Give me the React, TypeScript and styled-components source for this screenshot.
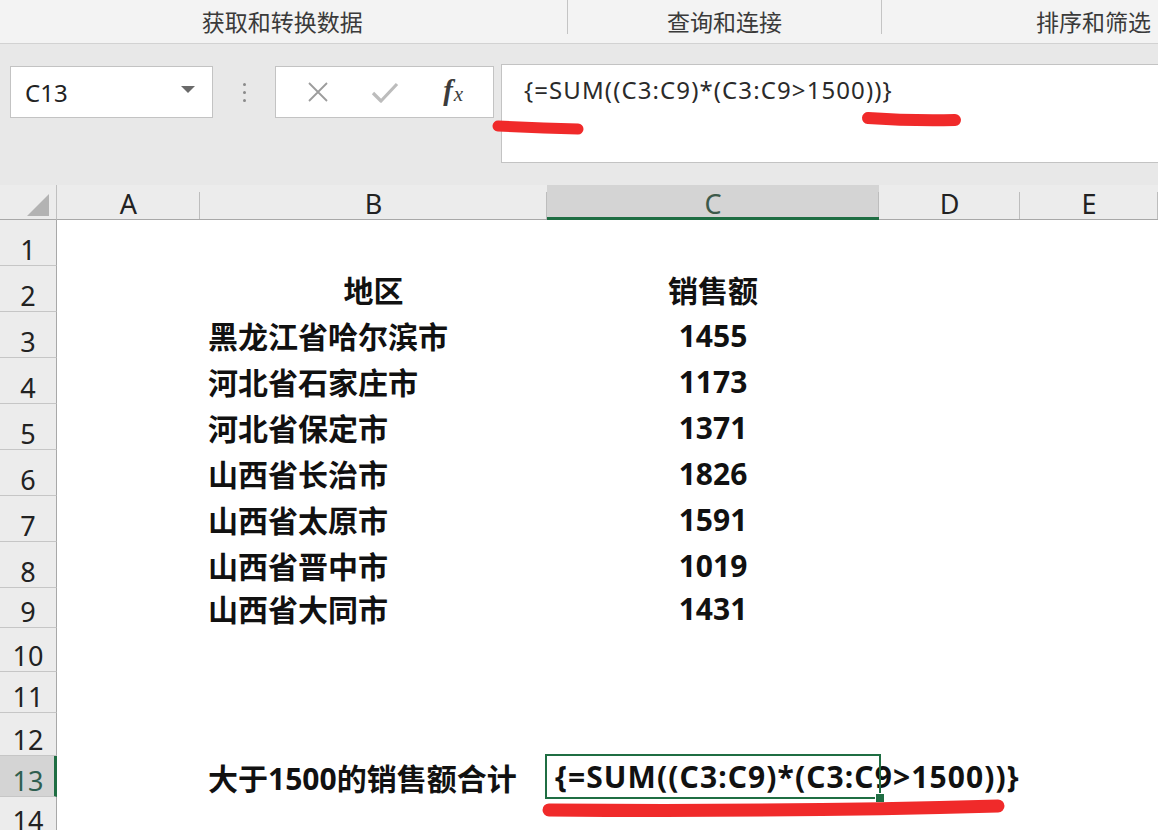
import React from 'react';
import styled, {createGlobalStyle} from 'styled-components';

const GlobalStyle = createGlobalStyle`
  html, body {
    margin: 0;
    padding: 0;
    background: #ffffff;
    overflow: hidden;
  }
  #root {
    width: 1158px;
    height: 830px;
    position: relative;
    overflow: hidden;
  }
`;

const green = '#1f6e43';
const uiFont = `"Noto Sans", "Noto Sans CJK SC", sans-serif`;
const cellFont = `"Noto Sans", "Noto Sans CJK SC", sans-serif`;

const Page = styled.div`
  display: flex;
  flex-direction: column;
  width: 1158px;
  height: 830px;
  font-family: ${uiFont};
`;

const Ribbon = styled.div`
  display: flex;
  height: 43px;
  background: #f3f3f3;
  border-bottom: 1px solid #d2d2d2;
`;

const RibbonGroup = styled.div<{$width: number; $align?: string}>`
  width: ${p => p.$width}px;
  display: flex;
  justify-content: ${p => p.$align || 'center'};
  align-items: center;
  padding-bottom: 2px;
  font-size: 23px;
  color: #3a3a3a;
  box-sizing: border-box;
`;

const RibbonSep = styled.div`
  width: 1px;
  height: 34px;
  background: #c4c4c4;
  align-self: flex-start;
`;

const FormulaBand = styled.div`
  height: 141px;
  background: #e8e8e8;
  display: flex;
  align-items: flex-start;
  padding: 20px 0 0 10px;
  box-sizing: border-box;
`;

const NameBox = styled.div`
  width: 203px;
  height: 52px;
  margin-top: 2px;
  background: #fff;
  border: 1px solid #c3c3c3;
  box-sizing: border-box;
  display: flex;
  align-items: center;
  justify-content: space-between;
  padding: 0 17px 0 14px;
  font-size: 24px;
  color: #222;
`;

const DropArrow = styled.span`
  width: 0;
  height: 0;
  border-left: 7px solid transparent;
  border-right: 7px solid transparent;
  border-top: 7px solid #6a6a6a;
  margin-top: -6px;
`;

const Grip = styled.div`
  width: 62px;
  height: 52px;
  margin-top: 2px;
  display: flex;
  flex-direction: column;
  align-items: center;
  justify-content: center;
  gap: 5px;
`;

const GripDot = styled.span`
  width: 3px;
  height: 3px;
  border-radius: 50%;
  background: #8a8a8a;
`;

const ButtonBox = styled.div`
  width: 219px;
  height: 52px;
  margin-top: 2px;
  background: #fff;
  border: 1px solid #c3c3c3;
  box-sizing: border-box;
  display: flex;
  align-items: center;
  justify-content: space-around;
  padding: 0 6px 0 8px;
`;

const IconSlot = styled.span`
  width: 40px;
  display: flex;
  justify-content: center;
  align-items: center;
`;

const Fx = styled.span`
  font-family: "Liberation Serif", "DejaVu Serif", serif;
  font-style: italic;
  font-weight: 700;
  font-size: 29px;
  color: #3c3c3c;
  line-height: 1;
  margin-top: -4px;
  & sub {
    font-size: 21px;
    font-weight: 400;
    vertical-align: baseline;
    margin-left: 1px;
    position: relative;
    top: 1px;
  }
`;

const FormulaInput = styled.div`
  flex: 1;
  height: 99px;
  margin-left: 7px;
  background: #fff;
  border: 1px solid #c3c3c3;
  border-right: none;
  box-sizing: border-box;
  padding: 8px 0 0 22px;
  font-size: 24px;
  letter-spacing: 1.1px;
  color: #2a2a2a;
`;

const Sheet = styled.div`
  display: grid;
  grid-template-columns: 57px 143px 347px 332px 141px 1fr;
  grid-auto-rows: min-content;
  background: #fff;
  flex: 1;
  overflow: hidden;
`;

const Corner = styled.div`
  height: 35px;
  background: #ececec;
  border-bottom: 1px solid #a8a8a8;
  border-right: 1px solid #c0c0c0;
  box-sizing: border-box;
  display: flex;
  justify-content: flex-end;
  align-items: flex-end;
  padding: 0 7px 3px 0;
`;

const CornerTriangle = styled.span`
  width: 0;
  height: 0;
  border-left: 22px solid transparent;
  border-bottom: 22px solid #b3b3b3;
`;

const ColHeader = styled.div<{$selected?: boolean}>`
  height: 35px;
  box-sizing: border-box;
  background: ${p => (p.$selected ? '#d4d4d4' : '#ececec')};
  border-bottom: ${p => (p.$selected ? `3px solid ${green}` : '1px solid #a8a8a8')};
  display: flex;
  align-items: center;
  justify-content: center;
  font-size: 27px;
  color: ${p => (p.$selected ? '#3d5a4a' : '#222')};
  padding-top: ${p => (p.$selected ? '5px' : '3px')};
  position: relative;
  &::after {
    content: '';
    position: absolute;
    right: 0;
    top: 7px;
    bottom: 0;
    width: 1px;
    background: #bdbdbd;
  }
`;

const RowHeader = styled.div<{$h: number; $selected?: boolean}>`
  height: ${p => p.$h}px;
  box-sizing: border-box;
  background: ${p => (p.$selected ? '#d4d4d4' : '#ececec')};
  border-bottom: 1px solid #c6c6c6;
  border-right: ${p => (p.$selected ? `3px solid ${green}` : '1px solid #a8a8a8')};
  display: flex;
  align-items: flex-end;
  justify-content: center;
  padding-left: ${p => (p.$selected ? '2px' : '0')};
  font-size: 27px;
  line-height: 1.15;
  color: ${p => (p.$selected ? '#2f5f50' : '#222')};
`;

const Cell = styled.div<{$h: number; $align?: 'left' | 'center'}>`
  height: ${p => p.$h}px;
  display: flex;
  align-items: center;
  justify-content: ${p => (p.$align === 'center' ? 'center' : 'flex-start')};
  padding: 0 8px;
  box-sizing: border-box;
  white-space: nowrap;
  overflow: visible;
  font-family: ${cellFont};
  font-weight: 700;
  font-size: 30px;
  color: #111;
`;

const SelectedCell = styled(Cell)`
  position: relative;
  z-index: 1;
  letter-spacing: 1.1px;
  &::after {
    content: '';
    position: absolute;
    left: -2px;
    top: -2px;
    right: -2px;
    bottom: -2px;
    border: 2px solid ${green};
  }
  &::before {
    content: '';
    position: absolute;
    right: -6px;
    bottom: -6px;
    width: 8px;
    height: 8px;
    background: ${green};
    border: 1px solid #fff;
    z-index: 2;
  }
`;

const Annotations = styled.svg`
  position: absolute;
  left: 0;
  top: 0;
  width: 1158px;
  height: 830px;
  pointer-events: none;
  z-index: 5;
`;

const rowHeights = [46, 46, 46, 46, 46, 46, 46, 46, 40, 44, 41, 43, 41, 40];

const sales: [string, string][] = [
    ['黑龙江省哈尔滨市', '1455'],
    ['河北省石家庄市', '1173'],
    ['河北省保定市', '1371'],
    ['山西省长治市', '1826'],
    ['山西省太原市', '1591'],
    ['山西省晋中市', '1019'],
    ['山西省大同市', '1431'],
];

const formula = '{=SUM((C3:C9)*(C3:C9>1500))}';

const App = () => {
    const renderRow = (row: number) => {
        const h = rowHeights[row - 1];
        let b: React.ReactNode = null;
        let c: React.ReactNode = null;
        let bAlign: 'left' | 'center' = 'left';
        if (row === 2) {
            b = '地区';
            c = '销售额';
            bAlign = 'center';
        } else if (row >= 3 && row <= 9) {
            b = sales[row - 3][0];
            c = sales[row - 3][1];
        } else if (row === 13) {
            b = '大于1500的销售额合计';
        }
        return (
            <React.Fragment key={row}>
                <RowHeader $h={h} $selected={row === 13}>{row}</RowHeader>
                <Cell $h={h} />
                <Cell $h={h} $align={bAlign}>{b}</Cell>
                {row === 13
                    ? <SelectedCell $h={h}>{formula}</SelectedCell>
                    : <Cell $h={h} $align="center">{c}</Cell>}
                <Cell $h={h} />
                <Cell $h={h} />
            </React.Fragment>
        );
    };

    return (
        <>
            <GlobalStyle/>
            <Page>
                <Ribbon>
                    <RibbonGroup $width={567}>
                        <span style={{marginLeft: -2}}>获取和转换数据</span>
                    </RibbonGroup>
                    <RibbonSep/>
                    <RibbonGroup $width={314}>查询和连接</RibbonGroup>
                    <RibbonSep/>
                    <RibbonGroup $width={276} $align="flex-end">
                        <span style={{marginRight: 7}}>排序和筛选</span>
                    </RibbonGroup>
                </Ribbon>
                <FormulaBand>
                    <NameBox>
                        <span>C13</span>
                        <DropArrow/>
                    </NameBox>
                    <Grip>
                        <GripDot/><GripDot/><GripDot/>
                    </Grip>
                    <ButtonBox>
                        <IconSlot>
                            <svg width="24" height="24" viewBox="0 0 24 24">
                                <path d="M3 3 L21 21 M21 3 L3 21" stroke="#9c9c9c" strokeWidth="1.8" fill="none"/>
                            </svg>
                        </IconSlot>
                        <IconSlot>
                            <svg width="28" height="24" viewBox="0 0 28 24">
                                <path d="M2 13 L10 21 L26 4" stroke="#bcbcbc" strokeWidth="3.2" fill="none"
                                      strokeLinejoin="round"/>
                            </svg>
                        </IconSlot>
                        <IconSlot>
                            <Fx>f<sub>x</sub></Fx>
                        </IconSlot>
                    </ButtonBox>
                    <FormulaInput>{formula}</FormulaInput>
                </FormulaBand>
                <Sheet>
                    <Corner><CornerTriangle/></Corner>
                    <ColHeader>A</ColHeader>
                    <ColHeader>B</ColHeader>
                    <ColHeader $selected>C</ColHeader>
                    <ColHeader>D</ColHeader>
                    <ColHeader>E</ColHeader>
                    {rowHeights.map((_, i) => renderRow(i + 1))}
                </Sheet>
            </Page>
            <Annotations viewBox="0 0 1158 830">
                <path d="M498 126 Q540 128 578 129" stroke="#f02a2a" strokeWidth="11" strokeLinecap="round" fill="none"/>
                <path d="M868 118 Q910 121 955 120" stroke="#f02a2a" strokeWidth="12" strokeLinecap="round" fill="none"/>
                <path d="M549 810 Q780 812 998 806" stroke="#f02a2a" strokeWidth="13" strokeLinecap="round" fill="none"/>
            </Annotations>
        </>
    );
};

export default App;
